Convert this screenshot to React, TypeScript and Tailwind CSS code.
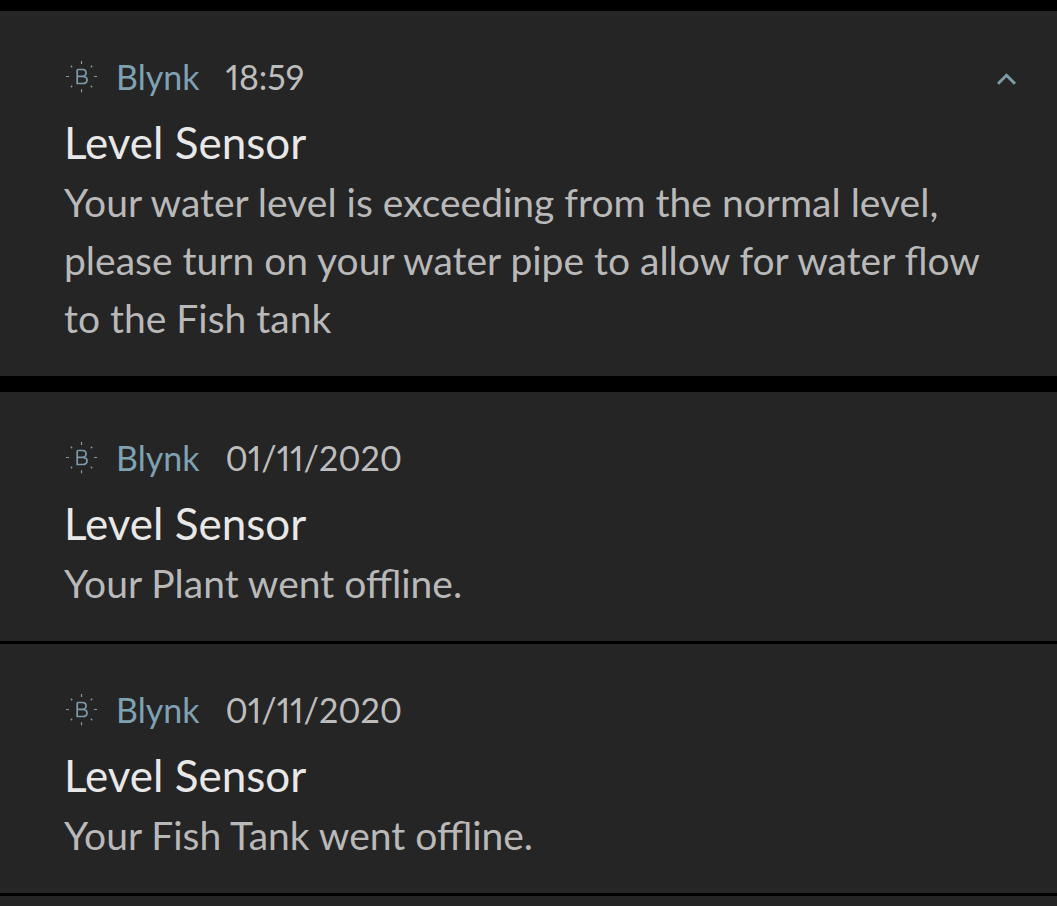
import React from "react";

type Notice = { id: number; time: string; title: string; body: string };

const groups: { expanded: boolean; notices: Notice[] }[] = [
  {
    expanded: true,
    notices: [
      {
        id: 1,
        time: "18:59",
        title: "Level Sensor",
        body: "Your water level is exceeding from the normal level, please turn on your water pipe to allow for water flow to the Fish tank",
      },
    ],
  },
  {
    expanded: false,
    notices: [
      { id: 2, time: "01/11/2020", title: "Level Sensor", body: "Your Plant went offline." },
      { id: 3, time: "01/11/2020", title: "Level Sensor", body: "Your Fish Tank went offline." },
    ],
  },
];

function BlynkIcon() {
  return (
    <svg className="h-8 w-9 shrink-0" viewBox="0 0 36 32" fill="none" aria-hidden="true">
      <path
        d="M17.5 0V3M17.5 28.2V31.2M2 15.5H5M30 15.5H33"
        stroke="#8a9aa0"
        strokeWidth="1.2"
      />
      <path
        d="M6.8 4.8L8.2 6.2M28.2 4.8L26.8 6.2M6.8 26.2L8.2 24.8M28.2 26.2L26.8 24.8"
        stroke="#8a9aa0"
        strokeWidth="1.3"
      />
      <path
        d="M13.2 8.5H18.5C23.3 8.5 23.3 15.3 18.5 15.3H13.2M18.5 15.3C24.5 15.3 24.5 22.5 18.5 22.5H13.2V8.5"
        stroke="#7c9cab"
        strokeWidth="1.7"
      />
    </svg>
  );
}

function NoticeCard({ notice, collapsible }: { notice: Notice; collapsible: boolean }) {
  return (
    <article className="bg-[#252525] px-16 pt-11 pb-[29px]">
      <header className="flex h-11 items-center">
        <BlynkIcon />
        <div className="ml-4 flex items-baseline gap-[26px] text-[34px] leading-[42px]">
          <span className="text-[#7fa2b3]">Blynk</span>
          <time className="proportional-nums text-[#bdbdbd]">{notice.time}</time>
        </div>
        {collapsible && (
          <button type="button" aria-label="Collapse" className="-mr-6 ml-auto">
            <svg className="h-5 w-5" viewBox="0 0 20 20" fill="none" stroke="#7c9cab" strokeWidth="3">
              <path d="M1 16.8L9.5 8.3L18 16.8" />
            </svg>
          </button>
        )}
      </header>
      <h2 className="mt-[15px] text-[44px] leading-[56px] text-[#e8e8e8]">{notice.title}</h2>
      <p className="mt-[3px] text-[39px] leading-[58px] text-[#b9b9b9]">{notice.body}</p>
    </article>
  );
}

export default function App() {
  return (
    <main className="flex min-h-screen flex-col gap-4 bg-black pt-[11px] font-['Lato',sans-serif]">
      {groups.map((group, index) => (
        <section key={index} className="flex flex-col gap-[3px] last:grow">
          {group.notices.map((notice) => (
            <NoticeCard key={notice.id} notice={notice} collapsible={group.expanded} />
          ))}
          {!group.expanded && <div className="min-h-2 grow bg-[#252525]" />}
        </section>
      ))}
    </main>
  );
}
